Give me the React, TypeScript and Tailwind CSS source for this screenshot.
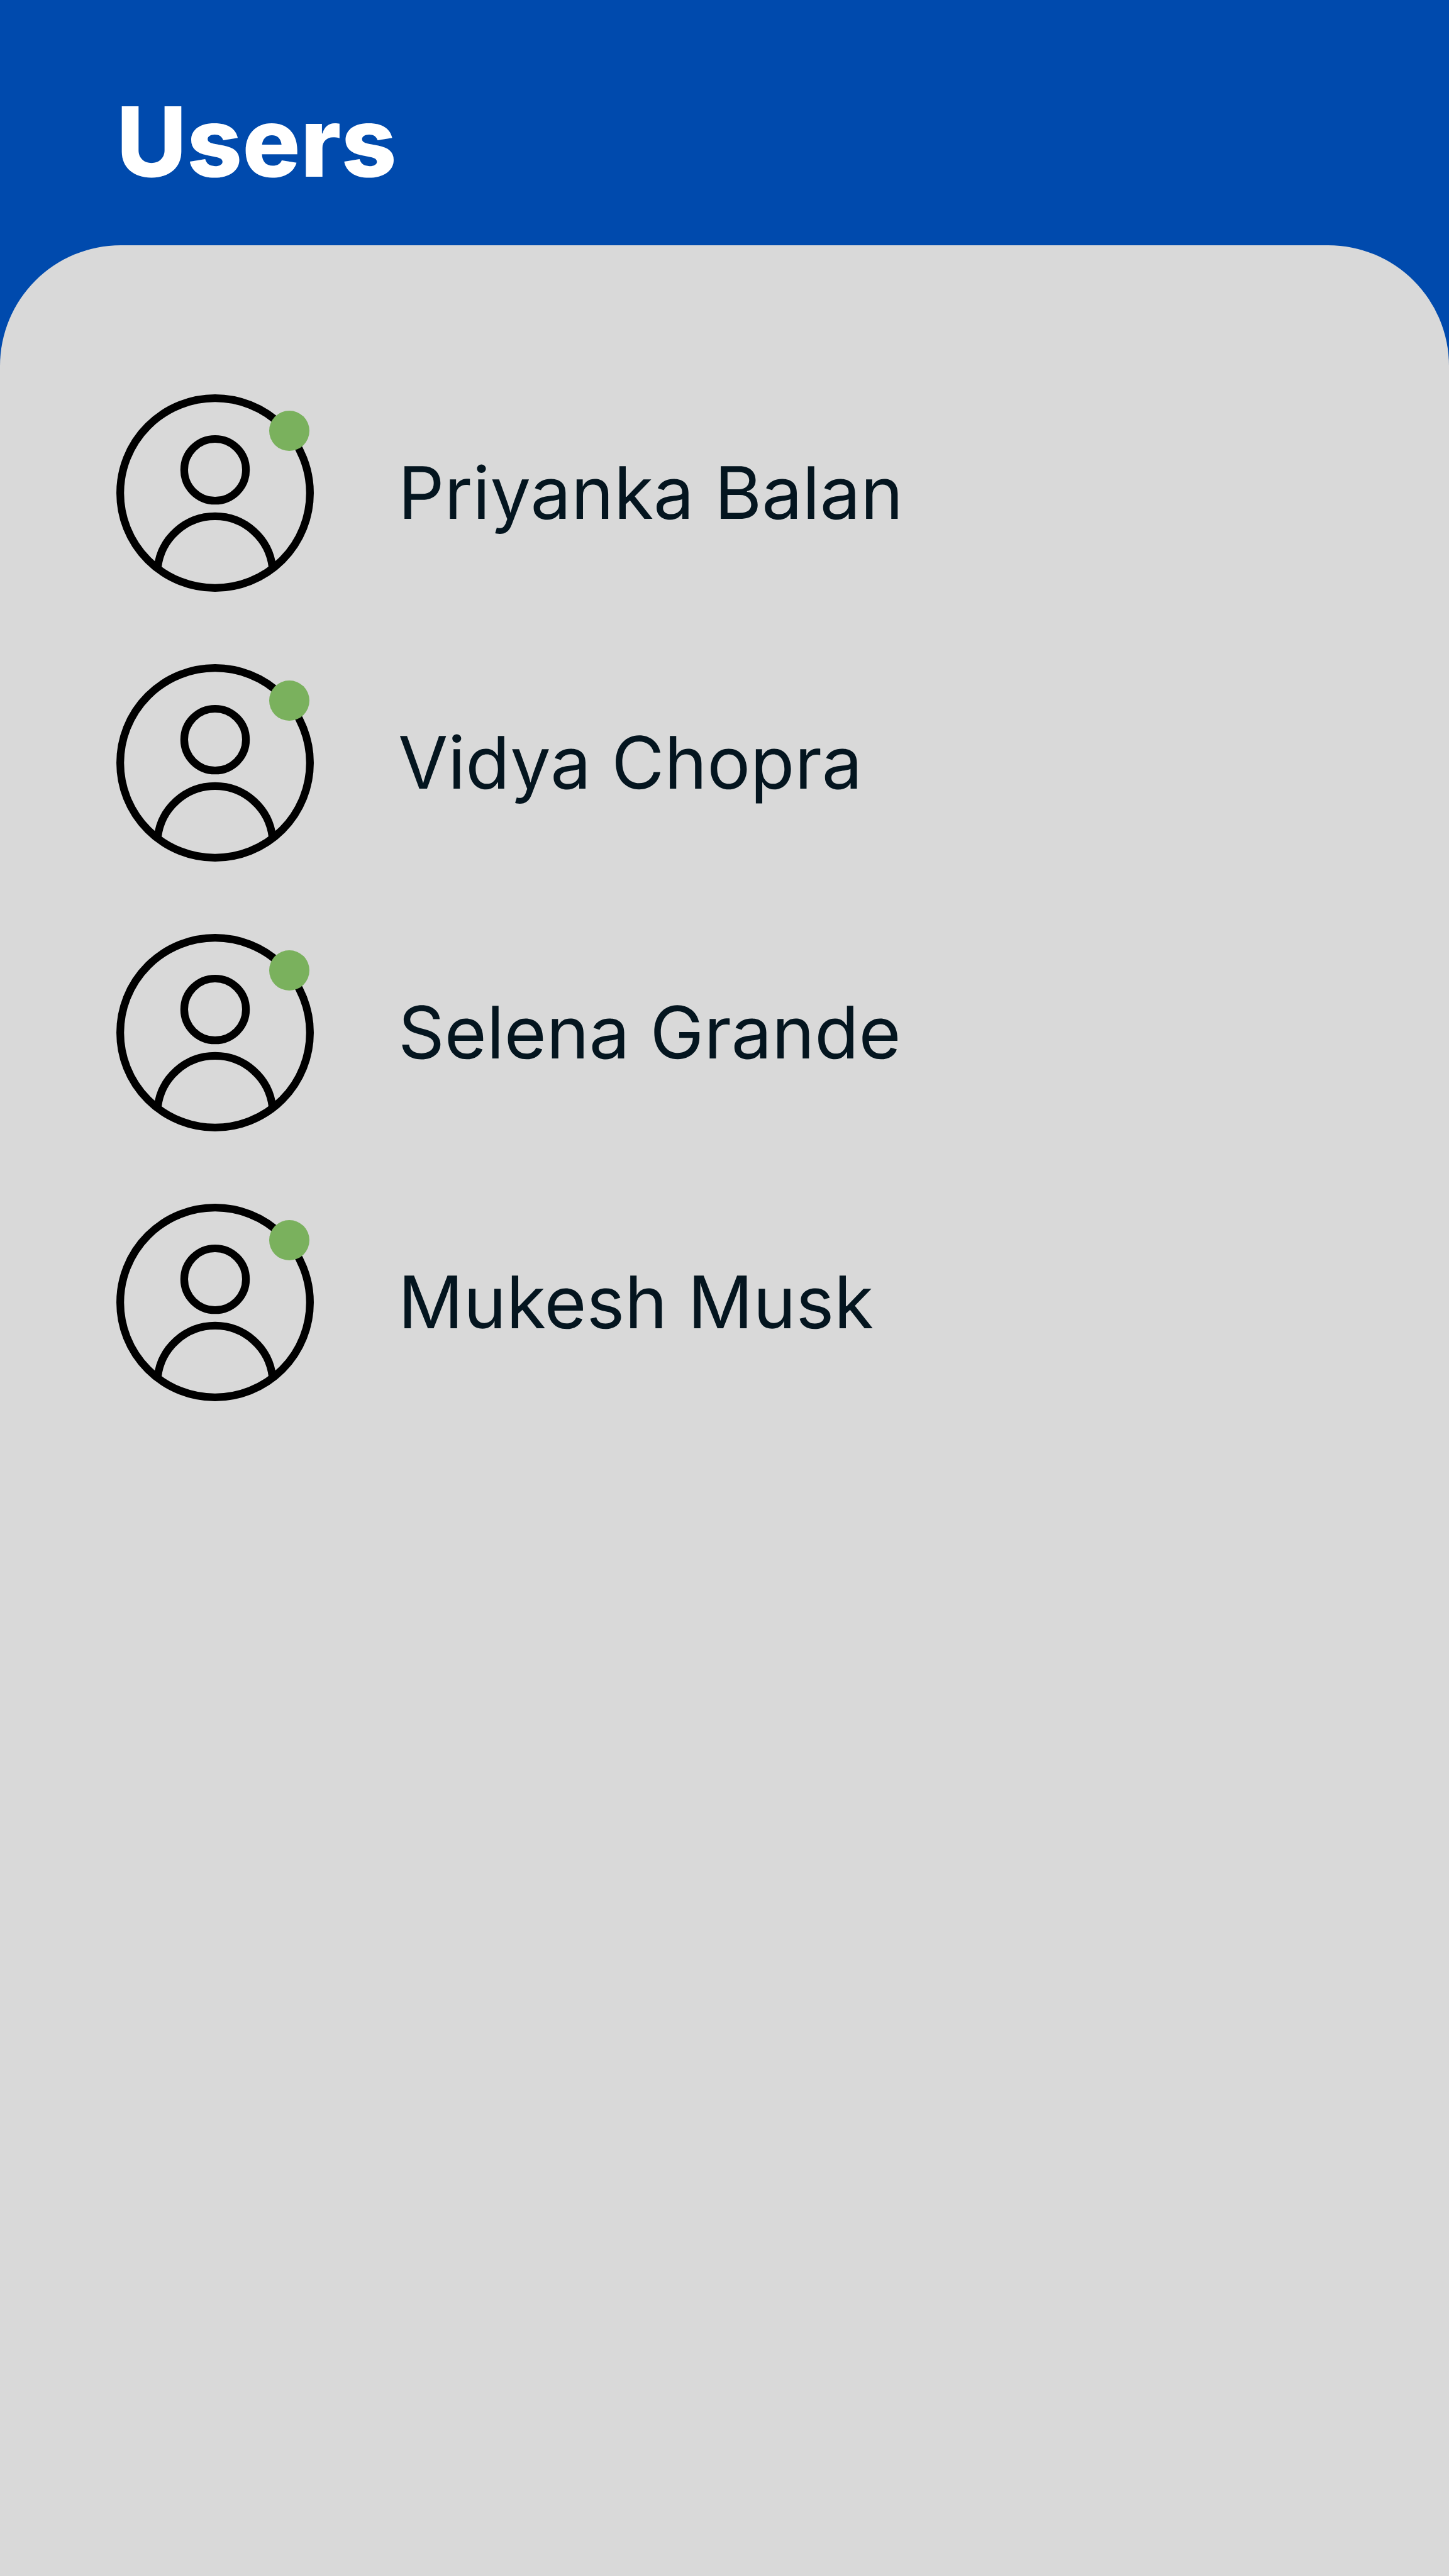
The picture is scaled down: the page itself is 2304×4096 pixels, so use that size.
type User = { name: string; online: boolean };

const users: User[] = [
  { name: "Priyanka Balan", online: true },
  { name: "Vidya Chopra", online: true },
  { name: "Selena Grande", online: true },
  { name: "Mukesh Musk", online: true },
];

function ProfileIcon() {
  return (
    <svg
      viewBox="0 0 490 490"
      className="size-full"
      fill="none"
      stroke="#000000"
      strokeWidth="19.1"
      aria-hidden="true"
    >
      <circle cx="245" cy="245" r="235.4" />
      <circle cx="245" cy="187.4" r="76.6" />
      <path d="M102.5 430A143.4 143.4 0 0 1 387.5 430" />
    </svg>
  );
}

function UserRow({ user }: { user: User }) {
  return (
    <li className="flex items-center gap-[134px]">
      <div className="relative size-[314px] shrink-0">
        <ProfileIcon />
        {user.online && (
          <span
            role="img"
            aria-label="Online"
            className="absolute top-[26px] right-[7px] size-16 rounded-full bg-[#7ab15d]"
          />
        )}
      </div>
      <span className="text-[115px] leading-[140px] text-[#04151f]">{user.name}</span>
    </li>
  );
}

export default function App() {
  return (
    <div className="flex min-h-screen flex-col bg-[#004aad] font-['Inter',sans-serif] [text-rendering:geometricPrecision]">
      <header className="px-[185px] pt-[133px] pb-[71px]">
        <h1 className="text-[154px] leading-[186px] font-extrabold text-white">Users</h1>
      </header>
      <main className="flex-1 rounded-t-[192px] bg-[#d9d9d9] px-[185px] pt-[237px]">
        <ul className="flex flex-col gap-[115px]">
          {users.map((user) => (
            <UserRow key={user.name} user={user} />
          ))}
        </ul>
      </main>
    </div>
  );
}
